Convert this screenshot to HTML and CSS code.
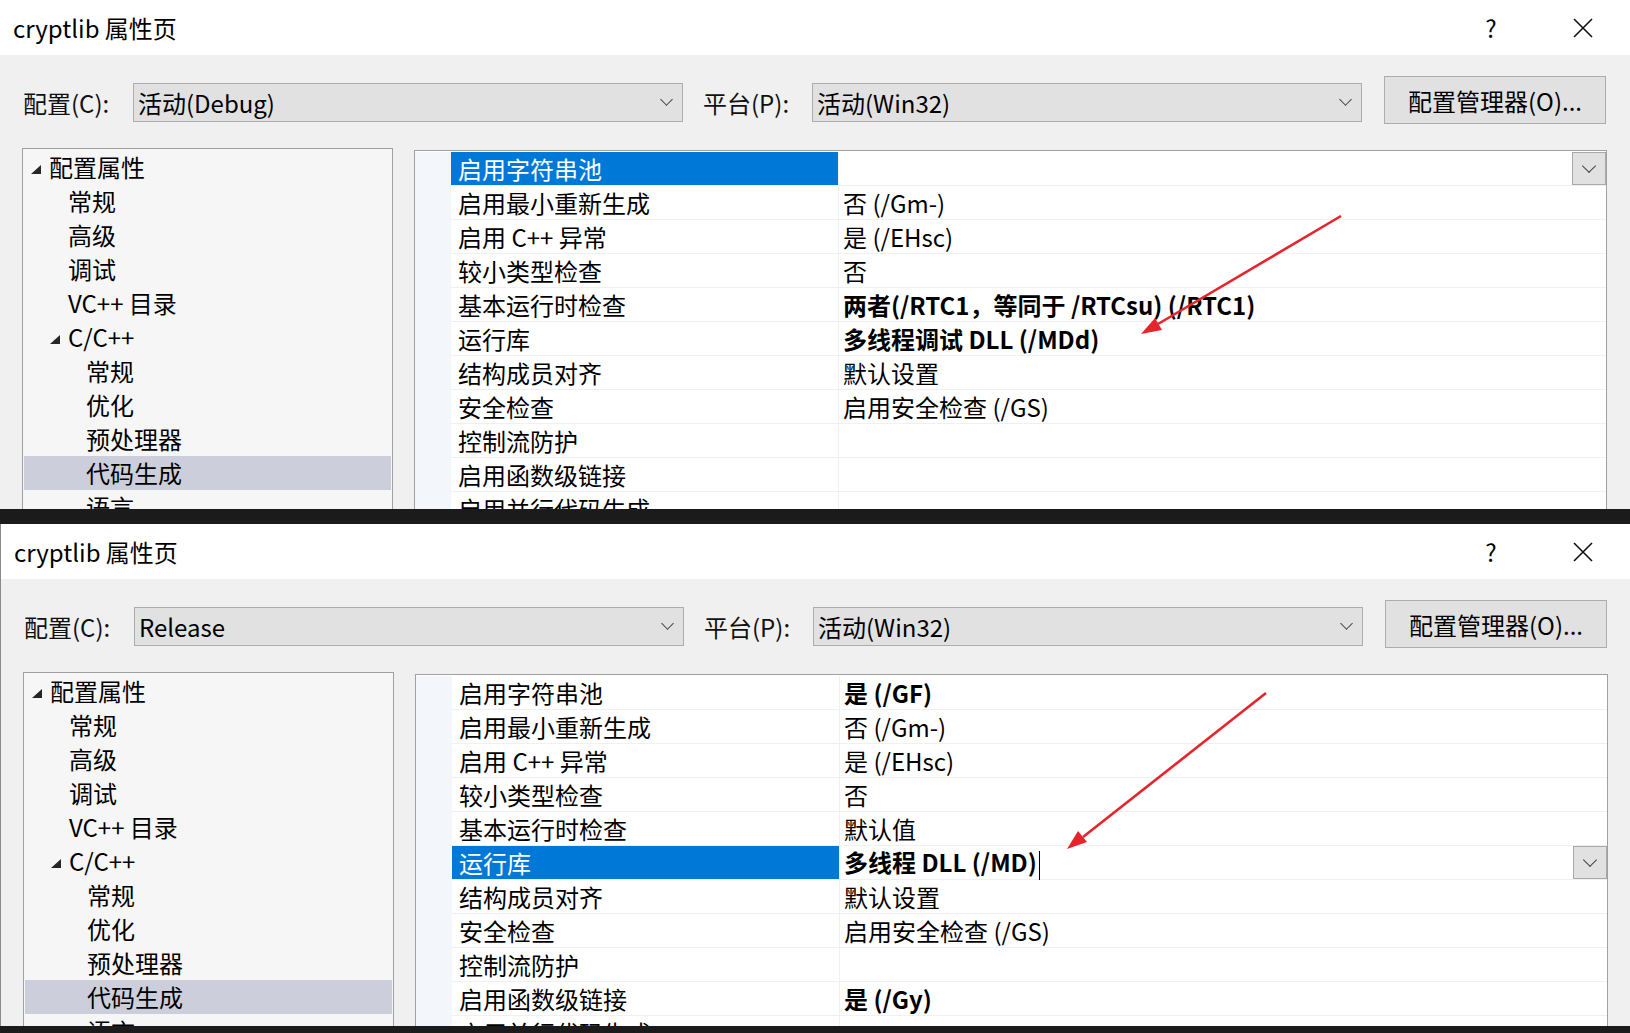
FILE: index.html
```html
<!DOCTYPE html>
<html>
<head>
    <title>cryptlib 属性页</title>
    <link rel="stylesheet" href="styles.css">
</head>
<body>
    <div class="dialog">
        <div class="titlebar">
            <div class="title">cryptlib 属性页</div>
            <div class="help">?</div>
            <div class="close">
                <svg width="20" height="20" viewBox="0 0 20 20"><path d="M1 1L19 19M19 1L1 19" stroke="#111" stroke-width="1.6" fill="none"/></svg>
            </div>
        </div>
        <div class="content">
            <div class="toolbar">
                <label class="field-label">配置(C):</label>
                <div class="combo"><span>活动(Debug)</span><i class="chevron"></i></div>
                <label class="field-label platform">平台(P):</label>
                <div class="combo"><span>活动(Win32)</span><i class="chevron"></i></div>
                <button class="manager">配置管理器(O)...</button>
            </div>
            <div class="panes">
                <ul class="tree">
                    <li class="lvl0"><i class="twisty"></i>配置属性</li>
                    <li class="lvl1">常规</li>
                    <li class="lvl1">高级</li>
                    <li class="lvl1">调试</li>
                    <li class="lvl1">VC++ 目录</li>
                    <li class="lvl1 has-twisty"><i class="twisty"></i>C/C++</li>
                    <li class="lvl2">常规</li>
                    <li class="lvl2">优化</li>
                    <li class="lvl2">预处理器</li>
                    <li class="lvl2 selected">代码生成</li>
                    <li class="lvl2">语言</li>
                </ul>
                <div class="grid">
                    <div class="gutter"></div>
                    <div class="rows">
                        <div class="row active"><div class="name">启用字符串池</div><div class="value"><span></span><button class="drop"><i class="chevron"></i></button></div></div>
                        <div class="row"><div class="name">启用最小重新生成</div><div class="value">否 (/Gm-)</div></div>
                        <div class="row"><div class="name">启用 C++ 异常</div><div class="value">是 (/EHsc)</div></div>
                        <div class="row"><div class="name">较小类型检查</div><div class="value">否</div></div>
                        <div class="row"><div class="name">基本运行时检查</div><div class="value strong">两者(/RTC1，等同于 /RTCsu) (/RTC1)</div></div>
                        <div class="row"><div class="name">运行库</div><div class="value strong">多线程调试 DLL (/MDd)</div></div>
                        <div class="row"><div class="name">结构成员对齐</div><div class="value">默认设置</div></div>
                        <div class="row"><div class="name">安全检查</div><div class="value">启用安全检查 (/GS)</div></div>
                        <div class="row"><div class="name">控制流防护</div><div class="value"></div></div>
                        <div class="row"><div class="name">启用函数级链接</div><div class="value"></div></div>
                        <div class="row"><div class="name">启用并行代码生成</div><div class="value"></div></div>
                    </div>
                </div>
            </div>
        </div>
        <svg class="arrow" width="1630" height="509" viewBox="0 0 1630 509">
            <line x1="1341" y1="216" x2="1158" y2="324" stroke="#e5242b" stroke-width="2.6"/>
            <polygon points="1141,334 1162,330 1155,318" fill="#e5242b"/>
        </svg>
    </div>

    <div class="dialog second">
        <div class="titlebar">
            <div class="title">cryptlib 属性页</div>
            <div class="help">?</div>
            <div class="close">
                <svg width="20" height="20" viewBox="0 0 20 20"><path d="M1 1L19 19M19 1L1 19" stroke="#111" stroke-width="1.6" fill="none"/></svg>
            </div>
        </div>
        <div class="content">
            <div class="toolbar">
                <label class="field-label">配置(C):</label>
                <div class="combo"><span>Release</span><i class="chevron"></i></div>
                <label class="field-label platform">平台(P):</label>
                <div class="combo"><span>活动(Win32)</span><i class="chevron"></i></div>
                <button class="manager">配置管理器(O)...</button>
            </div>
            <div class="panes">
                <ul class="tree">
                    <li class="lvl0"><i class="twisty"></i>配置属性</li>
                    <li class="lvl1">常规</li>
                    <li class="lvl1">高级</li>
                    <li class="lvl1">调试</li>
                    <li class="lvl1">VC++ 目录</li>
                    <li class="lvl1 has-twisty"><i class="twisty"></i>C/C++</li>
                    <li class="lvl2">常规</li>
                    <li class="lvl2">优化</li>
                    <li class="lvl2">预处理器</li>
                    <li class="lvl2 selected">代码生成</li>
                    <li class="lvl2">语言</li>
                </ul>
                <div class="grid">
                    <div class="gutter"></div>
                    <div class="rows">
                        <div class="row"><div class="name">启用字符串池</div><div class="value strong">是 (/GF)</div></div>
                        <div class="row"><div class="name">启用最小重新生成</div><div class="value">否 (/Gm-)</div></div>
                        <div class="row"><div class="name">启用 C++ 异常</div><div class="value">是 (/EHsc)</div></div>
                        <div class="row"><div class="name">较小类型检查</div><div class="value">否</div></div>
                        <div class="row"><div class="name">基本运行时检查</div><div class="value">默认值</div></div>
                        <div class="row active"><div class="name">运行库</div><div class="value strong"><span>多线程 DLL (/MD)<i class="caret"></i></span><button class="drop"><i class="chevron"></i></button></div></div>
                        <div class="row"><div class="name">结构成员对齐</div><div class="value">默认设置</div></div>
                        <div class="row"><div class="name">安全检查</div><div class="value">启用安全检查 (/GS)</div></div>
                        <div class="row"><div class="name">控制流防护</div><div class="value"></div></div>
                        <div class="row"><div class="name">启用函数级链接</div><div class="value strong">是 (/Gy)</div></div>
                        <div class="row"><div class="name">启用并行代码生成</div><div class="value"></div></div>
                    </div>
                </div>
            </div>
        </div>
        <svg class="arrow" width="1630" height="502" viewBox="0 0 1630 502">
            <line x1="1265" y1="169" x2="1082" y2="313" stroke="#e5242b" stroke-width="2.6"/>
            <polygon points="1066,325 1086,318 1077,307" fill="#e5242b"/>
        </svg>
    </div>
</body>
</html>
```

FILE: styles.css
```css
* {
    box-sizing: border-box;
    margin: 0;
    padding: 0;
}

body {
    background-color: #1b1b1c;
    font-family: "Noto Sans CJK SC", "Noto Sans", sans-serif;
    font-size: 24px;
    color: #000;
    width: 1630px;
    height: 1033px;
    overflow: hidden;
}

.dialog {
    position: relative;
    height: 509px;
    background-color: #f0f0f0;
    overflow: hidden;
}

.dialog.second {
    height: 502px;
    margin-top: 15px;
    border-left: 1px solid #8a8a8a;
}

.titlebar {
    display: flex;
    align-items: center;
    height: 55px;
    background-color: #fff;
    padding-right: 27px;
}

.title {
    flex: 1;
    padding-left: 13px;
    line-height: 55px;
}

.help {
    width: 40px;
    text-align: center;
    line-height: 55px;
}

.close {
    display: flex;
    align-items: center;
    justify-content: center;
    width: 40px;
    margin-left: 52px;
}

.toolbar {
    display: flex;
    align-items: flex-start;
    margin-top: 21px;
    padding-left: 23px;
    height: 48px;
}

.field-label {
    width: 110px;
    margin-top: 7px;
    line-height: 39px;
    color: #111;
}

.field-label.platform {
    width: 109px;
    margin-left: 20px;
}

.combo {
    display: flex;
    align-items: center;
    justify-content: space-between;
    width: 550px;
    height: 39px;
    margin-top: 7px;
    padding: 0 11px 0 4px;
    background-color: #e1e1e1;
    border: 1px solid #adadad;
    line-height: 37px;
}

.chevron {
    display: block;
    width: 9px;
    height: 9px;
    border-right: 1.3px solid #444;
    border-bottom: 1.3px solid #444;
    transform: translateY(-3px) rotate(45deg);
}

.manager {
    width: 222px;
    height: 48px;
    margin-left: 22px;
    background-color: #e1e1e1;
    border: 1px solid #adadad;
    font-family: inherit;
    font-size: 24px;
    color: #000;
}

.panes {
    display: flex;
    align-items: flex-start;
    gap: 21px;
    margin-top: 24px;
    padding-left: 22px;
}

.tree {
    list-style: none;
    width: 371px;
    height: 600px;
    padding: 1px;
    background-color: #f6f6f6;
    border: 1px solid #a0a0a0;
}

.tree li {
    display: flex;
    align-items: center;
    height: 34px;
    line-height: 34px;
}

.tree .lvl0 {
    padding-left: 7px;
}

.tree .lvl1 {
    padding-left: 44px;
}

.tree .lvl1.has-twisty {
    padding-left: 26px;
}

.tree .lvl2 {
    padding-left: 62px;
}

.tree .selected {
    background-color: #cccedb;
}

.twisty {
    display: block;
    width: 0;
    height: 0;
    margin-right: 8px;
    margin-top: 4px;
    border-left: 10px solid transparent;
    border-bottom: 9px solid #262626;
}

.grid {
    display: flex;
    width: 1193px;
    height: 600px;
    margin-top: 2px;
    padding-top: 1px;
    background-color: #fff;
    border: 1px solid #a0a0a0;
}

.gutter {
    width: 36px;
    background-color: #f3f6fb;
}

.rows {
    flex: 1;
}

.row {
    display: flex;
    height: 34px;
    border-bottom: 1px solid #f0f0f0;
}

.row .name {
    width: 388px;
    padding-left: 7px;
    line-height: 33px;
    border-right: 1px solid #f0f0f0;
    white-space: nowrap;
}

.row .value {
    flex: 1;
    display: flex;
    align-items: center;
    justify-content: space-between;
    padding-left: 4px;
    line-height: 33px;
    white-space: nowrap;
}

.row.active .name {
    background-color: #0078d7;
    color: #fff;
}

.value.strong {
    font-weight: bold;
}

.drop {
    display: flex;
    align-items: center;
    justify-content: center;
    width: 34px;
    height: 33px;
    background-color: #e1e1e1;
    border: 1px solid #a9a9a9;
}

.drop .chevron {
    width: 10px;
    height: 10px;
}

.caret {
    display: inline-block;
    width: 1px;
    height: 29px;
    margin-left: 2px;
    vertical-align: middle;
    background-color: #000;
}

.arrow {
    position: absolute;
    left: 0;
    top: 0;
    pointer-events: none;
}
```
